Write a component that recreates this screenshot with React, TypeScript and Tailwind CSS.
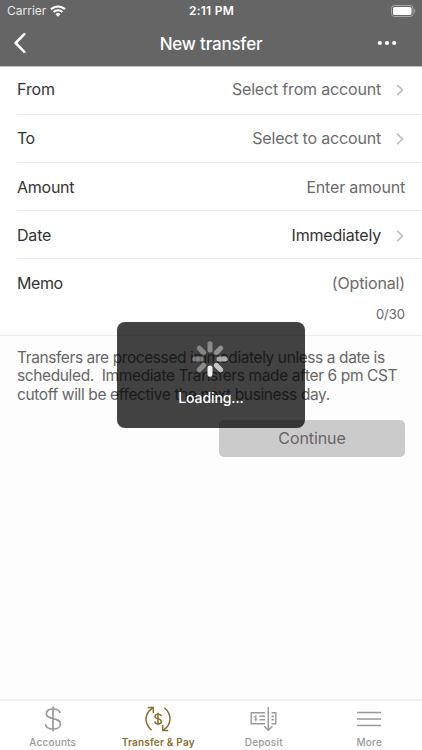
import type { ReactNode } from 'react';
import { clsx } from 'clsx';

const SPOKES = [
  { angle: 0, opacity: 0.38 },
  { angle: 45, opacity: 0.42 },
  { angle: 90, opacity: 0.6 },
  { angle: 135, opacity: 0.7 },
  { angle: 180, opacity: 0.92 },
  { angle: 225, opacity: 0.38 },
  { angle: 270, opacity: 0.34 },
  { angle: 315, opacity: 0.36 },
];

export default function App() {
  return (
    <div className="relative flex h-[750px] w-[422px] flex-col overflow-hidden bg-[#fdfdfd] font-['Inter','Liberation_Sans',sans-serif] text-[#333333]">
      <Header />

      <main className="flex flex-1 flex-col">
        <div className="flex flex-col border-b border-[#ebebeb] bg-white pl-[17px]">
          <Row className="h-12 pb-[3px]" label="From" labelClass="tracking-[-0.1px]">
            <span className="tracking-[-0.18px] text-[#6b6b6b]">Select from account</span>
            <Chevron />
          </Row>
          <Row className="h-12 pb-px" label="To" labelClass="tracking-[-0.6px]">
            <span className="tracking-[-0.18px] text-[#6b6b6b]">Select to account</span>
            <Chevron />
          </Row>
          <Row className="h-12 pt-px" label="Amount" labelClass="tracking-[-0.25px]">
            <span className="tracking-[-0.18px] text-[#6b6b6b]">Enter amount</span>
          </Row>
          <Row className="h-12 pt-px" label="Date" labelClass="tracking-[-0.2px]">
            <span className="tracking-[-0.2px]">Immediately</span>
            <Chevron />
          </Row>
          <div className="flex h-[76px] flex-col pr-[17px] pt-[12px]">
            <div className="flex items-center justify-between text-base">
              <span className="tracking-[-0.4px]">Memo</span>
              <span className="tracking-[-0.15px] text-[#6b6b6b]">(Optional)</span>
            </div>
            <span className="mt-[9px] self-end text-[13px] leading-5 text-[#666666]">0/30</span>
          </div>
        </div>

        <p className="whitespace-pre pl-[17px] pt-[13px] text-[15.5px] leading-[18.3px] text-[#666666]">
          <span className="block tracking-[-0.41px]">Transfers are processed immediately unless a date is</span>
          <span className="block tracking-[-0.38px]">scheduled.  Immediate Transfers made after 6 pm CST</span>
          <span className="block tracking-[-0.37px]">cutoff will be effective the next business day.</span>
        </p>

        <button className="mr-[17px] mt-[16px] h-[37px] w-[186px] self-end rounded-[5px] bg-[#cbcbcb] text-base tracking-[-0.1px] text-[#666666]">
          Continue
        </button>
      </main>

      <TabBar />
      <LoadingOverlay />
    </div>
  );
}

function Header() {
  return (
    <header className="flex h-[67px] flex-col border-b border-[#bcbcbc] bg-[#656565] text-white">
      <div className="grid h-[22px] grid-cols-3 items-center pl-[7px] pr-[6px] text-xs">
        <div className="flex items-center gap-[4px]">
          <span className="text-[#e8e8e8]">Carrier</span>
          <svg width="16" height="12" viewBox="0 0 16 12" fill="none" stroke="currentColor" strokeWidth="2.1">
            <path d="M1 4.3a10 10 0 0 1 14 0" />
            <path d="M3.6 7.1a6.2 6.2 0 0 1 8.8 0" />
            <path d="M8 11.8 5.5 9.2a3.6 3.6 0 0 1 5 0z" fill="currentColor" stroke="none" />
          </svg>
        </div>
        <span className="text-center font-semibold tracking-[0.25px]">2:11 PM</span>
        <svg className="justify-self-end" width="25" height="12" viewBox="0 0 25 12">
          <rect x="0.5" y="0.5" width="21.5" height="11" rx="3" fill="none" stroke="#a8a8a8" />
          <rect x="2" y="2" width="18.5" height="8" rx="1.6" fill="#fff" />
          <path d="M23.2 4v4c1.5-.6 1.5-3.4 0-4z" fill="#a8a8a8" />
        </svg>
      </div>
      <div className="grid h-[42px] grid-cols-[60px_1fr_60px] items-center">
        <svg className="ml-[14px]" width="12" height="20" viewBox="0 0 12 20" fill="none" stroke="currentColor" strokeWidth="2.5" strokeLinecap="round" strokeLinejoin="round">
          <path d="M10.4 1.2 1.6 10l8.8 8.8" />
        </svg>
        <h1 className="pt-[3px] text-center text-[17px] font-medium tracking-[-0.2px]">New transfer</h1>
        <svg className="ml-[15px]" width="20" height="6" viewBox="0 0 20 6" fill="currentColor">
          <circle cx="2.8" cy="3" r="2.1" />
          <circle cx="10" cy="3" r="2.1" />
          <circle cx="17.2" cy="3" r="2.1" />
        </svg>
      </div>
    </header>
  );
}

interface RowProps {
  label: string;
  labelClass?: string;
  className?: string;
  children: ReactNode;
}

function Row({ label, labelClass, className, children }: RowProps) {
  return (
    <div className={clsx('flex items-center justify-between border-b border-[#ebebeb] pr-[17px] text-base', className)}>
      <span className={labelClass}>{label}</span>
      <div className="flex items-center">{children}</div>
    </div>
  );
}

function Chevron() {
  return (
    <svg className="ml-[15px] mr-px mt-px" width="8" height="12" viewBox="0 0 8 12" fill="none" stroke="#c2c2c2" strokeWidth="1.8">
      <path d="M1.2 0.8 6.5 6l-5.3 5.2" />
    </svg>
  );
}

function LoadingOverlay() {
  return (
    <div className="absolute left-[117px] top-[322px] flex h-[106px] w-[188px] flex-col items-center rounded-[8px] bg-black/74 pt-[18px]">
      <svg className="mr-[2px]" width="38" height="38" viewBox="-19 -19 38 38" stroke="#fff" strokeWidth="5" strokeLinecap="round">
        {SPOKES.map(s => (
          <line key={s.angle} x1="0" y1="-9" x2="0" y2="-15.2" opacity={s.opacity} transform={`rotate(${s.angle})`} />
        ))}
      </svg>
      <span className="mt-[10px] text-[14px] font-medium leading-5 tracking-[-0.1px] text-white">Loading...</span>
    </div>
  );
}

function TabBar() {
  return (
    <nav className="grid h-[51px] grid-cols-4 border-t-2 border-[#f0f0f0] bg-white text-[#999999]">
      <Tab label="Accounts">
        <svg width="18" height="26" viewBox="0 0 18 26" fill="none" stroke="currentColor" strokeWidth="1.7">
          <path d="M9 .5v25" />
          <path d="M16 7.2C15.6 4.6 13 3 9 3 5 3 2.3 4.8 2.3 7.7c0 6.6 14.2 3.2 14.2 10.2 0 3.1-3 5.1-7.4 5.1-4.6 0-7.3-2-7.6-5" />
        </svg>
      </Tab>
      <Tab label="Transfer & Pay" active>
        <svg width="26" height="26" viewBox="0 0 26 26" fill="none" stroke="currentColor" strokeWidth="1.5">
          <path d="M6.6 24.2C-1 17.5-1 8 7.6 1.8" />
          <path d="M2.8 1.5h5.5v5.4" />
          <path d="M19.4 1.8C27 8.5 27 18 18.4 24.2" />
          <path d="M23.2 24.5h-5.5v-5.4" />
          <path d="M13 6.8v12.4" />
          <path d="M16.2 10.2c-.2-1.2-1.4-1.9-3.1-1.9-1.8 0-3.1.8-3.1 2.2 0 3.1 6.4 1.6 6.4 4.9 0 1.5-1.4 2.4-3.3 2.4-2 0-3.2-.9-3.4-2.3" />
        </svg>
      </Tab>
      <Tab label="Deposit">
        <svg width="27" height="26" viewBox="0 0 27 26" fill="none" stroke="currentColor" strokeWidth="1.4">
          <path d="M15 6.7H1.2v11H15" />
          <path d="M21.5 6.7h4.3v11h-4.3" />
          <path d="M9.5 10.2H15M9.5 13.8H15M21.5 10.2H24M21.5 13.8H24" />
          <path d="M18.3 1v23M14.2 20.3l4.1 4 4.1-4" />
          <path d="M7 10.5c-.5-.8-2.6-.8-2.6.4 0 1.4 2.7.8 2.7 2.3 0 1.2-2.2 1.2-2.8.3M5.7 9.2v6" strokeWidth="0.9" />
        </svg>
      </Tab>
      <Tab label="More">
        <svg width="24" height="26" viewBox="0 0 24 26" stroke="currentColor" strokeWidth="1.5">
          <path d="M0 6.6h24M0 13h24M0 19.4h24" />
        </svg>
      </Tab>
    </nav>
  );
}

function Tab({ label, active, children }: { label: string; active?: boolean; children: ReactNode }) {
  return (
    <div className={clsx('flex flex-col items-center pt-[5px]', active && 'text-[#8b6d2f]')}>
      {children}
      <span className={clsx('mt-[3px] whitespace-nowrap text-[10px] leading-[14px]', active ? 'font-semibold tracking-[0.2px]' : 'font-medium tracking-[0.2px]')}>
        {label}
      </span>
    </div>
  );
}
